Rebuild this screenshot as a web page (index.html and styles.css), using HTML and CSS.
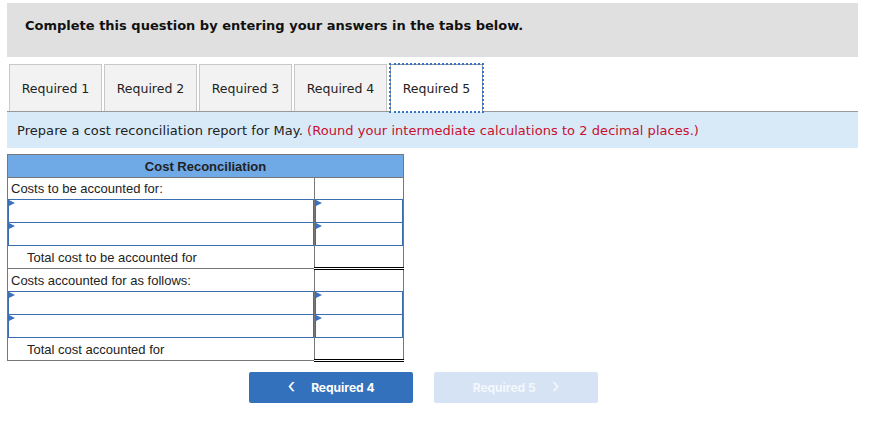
FILE: index.html
```html
<!DOCTYPE html>
<html>
<head>
<meta charset="utf-8">
<link rel="stylesheet" href="styles.css">
</head>
<body>
<div class="page">
  <div class="banner">Complete this question by entering your answers in the tabs below.</div>
  <div class="tabs">
    <div class="tab">Required 1</div>
    <div class="tab">Required 2</div>
    <div class="tab">Required 3</div>
    <div class="tab">Required 4</div>
    <div class="tab active">Required 5</div>
  </div>
  <div class="instr">Prepare a cost reconciliation report for May. <span class="red">(Round your intermediate calculations to 2 decimal places.)</span></div>
  <table class="recon">
    <colgroup><col class="c1"><col class="c2"></colgroup>
    <tr><th colspan="2">Cost Reconciliation</th></tr>
    <tr><td class="lbl">Costs to be accounted for:</td><td class="num"></td></tr>
    <tr class="inrow"><td><div class="inp"></div></td><td><div class="inp"></div></td></tr>
    <tr class="inrow"><td><div class="inp"></div></td><td><div class="inp"></div></td></tr>
    <tr><td class="lbl indent">Total cost to be accounted for</td><td class="num total"></td></tr>
    <tr><td class="lbl">Costs accounted for as follows:</td><td class="num"></td></tr>
    <tr class="inrow"><td><div class="inp"></div></td><td><div class="inp"></div></td></tr>
    <tr class="inrow"><td><div class="inp"></div></td><td><div class="inp"></div></td></tr>
    <tr><td class="lbl indent">Total cost accounted for</td><td class="num total top"></td></tr>
  </table>
  <div class="nav">
    <div class="btn prev"><span class="chev">&lsaquo;</span><span>Required 4</span></div>
    <div class="btn next"><span>Required 5</span><span class="chev">&rsaquo;</span></div>
  </div>
</div>
</body>
</html>
```
FILE: styles.css
```css
html, body { margin: 0; padding: 0; background: #fff; }
.page { padding: 3px 0 0 7px; width: 851px; font-family: "DejaVu Sans", Verdana, sans-serif; color: #222; }
.banner { background: #e0e0e0; height: 54px; box-sizing: border-box; padding: 15px 0 0 18px; font-size: 13px; font-weight: bold; line-height: 16px; color: #111; }
.tabs { display: flex; gap: 2px; margin-top: 7px; padding-left: 2px; border-bottom: 1px solid #999; height: 47px; }
.tab { width: 93px; box-sizing: border-box; height: 47px; background: #f2f2f2; border: 1px solid #c8c8c8; border-bottom: none; font-size: 12.5px; line-height: 48px; text-align: center; color: #222; }
.tab.active { background: #fff; border: 1px solid #999; border-bottom: none; height: 48px; outline: 2px dotted #3a75c4; outline-offset: -1px; margin-left: 1px; }
.instr { background: #d8eaf8; height: 36px; box-sizing: border-box; padding: 11px 0 0 10px; font-size: 13px; line-height: 16px; color: #222; letter-spacing: 0.05px; }
.red { color: #c8102e; }
.recon { margin-top: 6px; border-collapse: collapse; table-layout: fixed; width: 396px; font-family: "Liberation Sans", Arial, sans-serif; font-size: 13px; color: #222; }
.c1 { width: 307px; }
.c2 { width: 89px; }
.recon th { background: #6fa9e6; border: 1px solid #777; height: 22px; padding: 0; font-weight: bold; text-align: center; color: #222; }
.recon td { border: 1px solid #777; padding: 0; height: 21px; }
.lbl { padding-left: 3px !important; }
.indent { padding-left: 19px !important; }
.num.total { border-bottom: 3px double #000; }
.num.top { border-top: 1px solid #000; }
.inrow td { height: 22px; }
.inp { position: relative; box-sizing: border-box; height: 24px; margin: -1px 0; border: 1px solid #3b6db3; background: #fff; }
.inp::before { content: ""; position: absolute; left: 0; top: 0; border-left: 6px solid #3b73c4; border-top: 3px solid transparent; border-bottom: 3px solid transparent; }
.nav { display: flex; gap: 21px; padding-left: 242px; margin-top: 10px; }
.btn { width: 164px; height: 31px; border-radius: 2px; display: flex; align-items: center; justify-content: center; gap: 16px; font-family: Inter, "Liberation Sans", sans-serif; font-weight: bold; font-size: 12px; color: #fff; }
.btn .chev { font-size: 20px; font-weight: normal; line-height: 20px; margin-top: -3px; }
.prev { background: #3371bd; }
.next { background: #d5e3f4; color: #f4f8fd; }
```
